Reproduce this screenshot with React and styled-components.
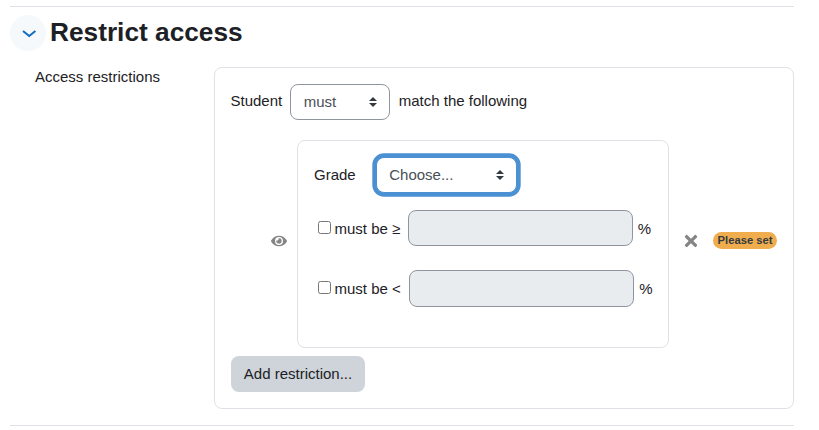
import React from "react";
import styled, { createGlobalStyle } from "styled-components";
import { FaEye, FaTimes } from "react-icons/fa";

const Global = createGlobalStyle`
  html, body { margin: 0; padding: 0; background: #fff; }
  body { font-family: "Liberation Sans", Arial, sans-serif; font-size: 15px; line-height: 22.5px; color: #1d2125; }
  * { box-sizing: border-box; }
`;

const arrows = `url("data:image/svg+xml,%3csvg xmlns='http://www.w3.org/2000/svg' width='4' height='5' viewBox='0 0 4 5'%3e%3cpath fill='%23343a40' d='M2 0L0 2h4zm0 5L0 3h4z'/%3e%3c/svg%3e")`;

const Page = styled.div`
  width: 819px;
  height: 430px;
  padding-top: 6px;
  overflow: hidden;
`;
const Section = styled.section`
  width: 784px;
  height: 420px;
  margin-left: 10px;
  border-top: 1px solid #dee2e6;
  border-bottom: 1px solid #dee2e6;
  padding-top: 8px;
`;
const Header = styled.div`
  display: flex;
  align-items: center;
  gap: 4px;
  height: 36px;
`;
const Toggle = styled.div`
  width: 36px;
  height: 36px;
  border-radius: 50%;
  background: #f5f9fc;
  display: flex;
  align-items: center;
  justify-content: center;
  color: #0f6cbf;
`;
const Chevron = styled.svg`
  display: block;
  width: 18px;
  height: 18px;
  flex-shrink: 0;
`;
const Title = styled.h3`
  margin: -2px 0 0;
  font-size: 26.25px;
  line-height: 36px;
  font-weight: 700;
  color: #1d2125;
`;
const FormRow = styled.div`
  display: flex;
  margin-top: 16px;
`;
const FieldLabel = styled.div`
  width: 204px;
  flex-shrink: 0;
  padding-left: 25px;
  line-height: 20px;
  color: #1d2125;
`;
const Card = styled.div`
  width: 580px;
  height: 342px;
  border: 1px solid #dee2e6;
  border-radius: 8px;
  padding: 16px;
`;
const TopRow = styled.div`
  display: flex;
  align-items: center;
  height: 36px;
  white-space: nowrap;
`;
const TopText = styled.span`
  padding-bottom: 2px;
  margin-left: ${(p) => p.$ml || 0}px;
`;
const Select = styled.select`
  appearance: none;
  display: block;
  width: ${(p) => p.$w}px;
  height: 36px;
  margin: 0 ${(p) => p.$mr}px 0 ${(p) => p.$ml}px;
  padding: 6px 28px 6px ${(p) => p.$pl}px;
  font: 15px/22.5px "Liberation Sans", Arial, sans-serif;
  color: #495057;
  background: #fff ${arrows} no-repeat right ${(p) => p.$ar}px center / 8px 10px;
  border: 1px solid ${(p) => (p.$focus ? "#4a90d2" : "#8f959e")};
  border-radius: 8px;
  box-shadow: ${(p) => (p.$focus ? "0 0 0 3.7px #4a90d2" : "none")};
  outline: none;
`;
const RuleRow = styled.div`
  display: flex;
  align-items: center;
  margin-top: 20px;
`;
const EyeSlot = styled.div`
  width: 66px;
  flex-shrink: 0;
  padding-left: 40px;
  margin-bottom: 6px;
  display: flex;
  color: #858585;
`;
const RuleCard = styled.div`
  width: 372px;
  flex-shrink: 0;
  height: 208px;
  border: 1px solid #dee2e6;
  border-radius: 8px;
  padding: 16px;
`;
const GradeRow = styled.div`
  display: flex;
  align-items: center;
  height: 36px;
`;
const ValueRow = styled.div`
  display: flex;
  align-items: center;
  white-space: nowrap;
  margin-top: ${(p) => p.$mt}px;
`;
const Check = styled.input.attrs({ type: "checkbox" })`
  margin: 0 3px ${(p) => p.$mb}px 4px;
  width: 13px;
  height: 13px;
  flex-shrink: 0;
`;
const ValueLabel = styled.span`
  margin: 0 ${(p) => p.$mr}px 0 0.5px;
  padding-top: 2px;
`;
const Percent = styled.span`
  padding-top: 2px;
`;
const ValueInput = styled.input`
  width: 225px;
  flex-shrink: 0;
  height: ${(p) => p.$h}px;
  background: #e9ecef;
  border: 1px solid #8f959e;
  border-radius: 8px;
  margin-right: 5px;
`;
const Remove = styled.div`
  display: flex;
  margin: 0 13px 6px 13px;
  color: #858585;
`;
const Badge = styled.span`
  display: inline-block;
  margin-bottom: 7px;
  background: #f0ad4e;
  color: #343a40;
  font-size: 11.25px;
  font-weight: 700;
  line-height: 11px;
  padding: 3px 4.5px;
  border-radius: 9px;
  white-space: nowrap;
`;
const AddButton = styled.button`
  display: block;
  margin-top: 8px;
  width: 134px;
  height: 36px;
  padding: 0;
  border: 0;
  border-radius: 8px;
  background: #ced4da;
  color: #1d2125;
  font: 15px/22.5px "Liberation Sans", Arial, sans-serif;
`;

export default function App() {
  return (
    <Page>
      <Global />
      <Section>
        <Header>
          <Toggle>
            <Chevron viewBox="0 0 18 18" fill="none">
              <path d="M4 7L10.2 12L16.4 7" stroke="currentColor" strokeWidth="2" />
            </Chevron>
          </Toggle>
          <Title>Restrict access</Title>
        </Header>
        <FormRow>
          <FieldLabel>Access restrictions</FieldLabel>
          <Card>
            <TopRow>
              <TopText $ml={-0.5}>Student</TopText>
              <Select $w={100} $ml={7.5} $mr={9} $pl={13} $ar={12} defaultValue="must">
                <option value="must">must</option>
              </Select>
              <TopText>match the following</TopText>
            </TopRow>
            <RuleRow>
              <EyeSlot>
                <FaEye size={16} />
              </EyeSlot>
              <RuleCard>
                <GradeRow>
                  <span>Grade</span>
                  <Select $w={141} $ml={20.5} $mr={0} $pl={12} $ar={12} $focus defaultValue="c">
                    <option value="c">Choose...</option>
                  </Select>
                </GradeRow>
                <ValueRow $mt={17}>
                  <Check $mb={1} />
                  <ValueLabel $mr={7.5}>must be ≥</ValueLabel>
                  <ValueInput disabled $h={36} />
                  <Percent>%</Percent>
                </ValueRow>
                <ValueRow $mt={24}>
                  <Check $mb={3} />
                  <ValueLabel $mr={8.5}>must be &lt;</ValueLabel>
                  <ValueInput disabled $h={37} />
                  <Percent>%</Percent>
                </ValueRow>
              </RuleCard>
              <Remove>
                <FaTimes size={18} />
              </Remove>
              <Badge>Please set</Badge>
            </RuleRow>
            <AddButton>Add restriction...</AddButton>
          </Card>
        </FormRow>
      </Section>
    </Page>
  );
}
